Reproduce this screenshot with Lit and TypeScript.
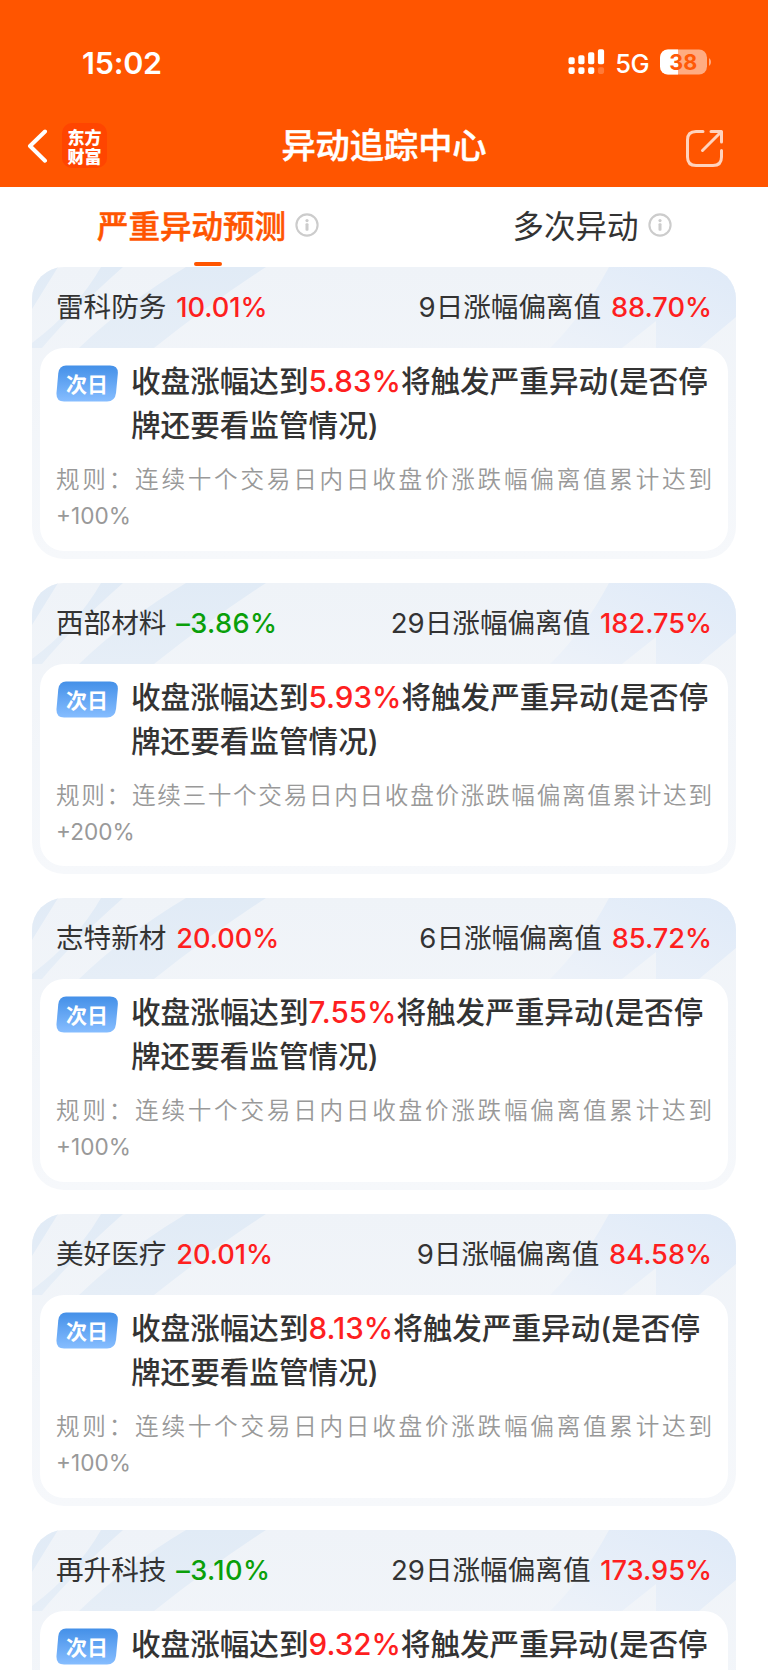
import { LitElement, html, css, svg } from "lit";
import { customElement, property } from "lit/decorators.js";

interface Stock {
  name: string;
  change: string;
  days: number;
  deviation: string;
  trigger: string;
  rule: string;
  limit: string;
}

const TEN = "规则：连续十个交易日内日收盘价涨跌幅偏离值累计达到";
const THIRTY = "规则：连续三十个交易日内日收盘价涨跌幅偏离值累计达到";

const STOCKS: Stock[] = [
  { name: "雷科防务", change: "10.01%", days: 9, deviation: "88.70%", trigger: "5.83%", rule: TEN, limit: "+100%" },
  { name: "西部材料", change: "–3.86%", days: 29, deviation: "182.75%", trigger: "5.93%", rule: THIRTY, limit: "+200%" },
  { name: "志特新材", change: "20.00%", days: 6, deviation: "85.72%", trigger: "7.55%", rule: TEN, limit: "+100%" },
  { name: "美好医疗", change: "20.01%", days: 9, deviation: "84.58%", trigger: "8.13%", rule: TEN, limit: "+100%" },
  { name: "再升科技", change: "–3.10%", days: 29, deviation: "173.95%", trigger: "9.32%", rule: THIRTY, limit: "+200%" },
];

const infoIcon = html`<svg class="info" width="24" height="24" viewBox="0 0 24 24" fill="none">
  <circle cx="12" cy="12" r="10.6" stroke="#ccc" stroke-width="2.1" />
  <circle cx="12" cy="7.6" r="1.6" fill="#ccc" />
  <rect x="10.5" y="10.3" width="3" height="7.4" rx="1" fill="#ccc" />
</svg>`;

@customElement("status-bar")
class StatusBar extends LitElement {
  static styles = css`
    :host { display: flex; justify-content: space-between; align-items: center; height: 38px; padding: 43px 56px 0 82px; color: #fff; }
    .time { font-size: 30.5px; font-weight: 600; letter-spacing: -0.2px; }
    .right { display: flex; align-items: center; }
    .net { font-size: 25.5px; font-weight: 450; margin: 2px 11px 0 10px; letter-spacing: -0.6px; }
  `;
  render() {
    const bars = [[0, 8, 7], [9.8, 6, 9], [19.6, 3, 12], [29.4, 0, 15]];
    return html`
      <span class="time">15:02</span>
      <span class="right">
        <svg width="37" height="26" viewBox="0 0 37 26" fill="#fff">
          ${bars.map(([x, y, h], i) => svg`
            <rect x=${x + 0.5} y=${y + 0.2} width="6.2" height=${h} rx="1.8" />
            <rect x=${x + 0.5} y="18.3" width="6.2" height="6.6" rx="1.8" opacity=${i === 3 ? 0.22 : 1} />`)}
        </svg>
        <span class="net">5G</span>
        <svg width="52" height="26" viewBox="0 0 52 26">
          <defs><clipPath id="level"><rect width="18" height="26" /></clipPath></defs>
          <rect y="0.5" width="47" height="25" rx="8" fill="#ffac82" />
          <rect y="0.5" width="47" height="25" rx="8" fill="#fff" clip-path="url(#level)" />
          <path d="M49 9.2c2.6 1 2.6 6.4 0 7.5z" fill="#ffac82" />
          <text x="23.2" y="20.7" text-anchor="middle" font-family="Inter" font-size="21.5" font-weight="700" fill="#ff5a08">38</text>
        </svg>
      </span>
    `;
  }
}

@customElement("nav-bar")
class NavBar extends LitElement {
  static styles = css`
    :host { display: grid; grid-template-columns: 1fr auto 1fr; align-items: center; height: 88px; padding: 5px 27px 0; box-sizing: border-box; color: #fff; }
    .left { display: flex; align-items: center; gap: 14px; }
    .logo { width: 45px; height: 45px; border-radius: 10px; background: #ff4500; display: grid; place-content: center; font: 900 17px/19px "Noto Sans CJK SC", sans-serif; text-align: center; }
    .title { font-size: 34.2px; font-weight: 500; line-height: 46px; -webkit-text-stroke: 0.5px #fff; }
    .share { justify-self: end; margin: 5px 17px 0 0; }
  `;
  render() {
    return html`
      <span class="left">
        <svg width="21" height="34" viewBox="0 0 21 34" fill="none" stroke="#fff" stroke-width="4" stroke-linecap="round" stroke-linejoin="round"><path d="M18 2.5L3 17l15 14.7" /></svg>
        <span class="logo">东方<br />财富</span>
      </span>
      <span class="title">异动追踪中心</span>
      <svg class="share" width="39" height="39" viewBox="0 0 39 39" fill="none" stroke="#ffd3bd" stroke-width="3" stroke-linecap="round" stroke-linejoin="round">
        <path d="M18 2.5H11C5.500 2.500 2.500 5.500 2.500 11V28C2.500 33.500 5.500 36.500 11 36.500H28C33.500 36.500 36.500 33.500 36.500 28V21.500" />
        <path d="M26 2.5H36.500V13M36 3L17.500 21.500" />
      </svg>
    `;
  }
}

@customElement("stock-card")
class StockCard extends LitElement {
  @property({ attribute: false }) stock!: Stock;
  static styles = css`
    :host { display: grid; height: 291.5px; border-radius: 32px; overflow: hidden; color: #333; background: linear-gradient(#eff3f8, #f6f8fb); }
    .art, .body { grid-area: 1 / 1; min-width: 0; }
    .body { display: flex; flex-direction: column; padding: 0 8px 8px; z-index: 1; }
    .head { display: flex; justify-content: space-between; height: 81px; line-height: 80px; padding: 0 16px; font-size: 27.6px; }
    .num { font-size: 27.2px; font-weight: 500; margin-left: 2px; }
    .up { color: #fe1f1f; }
    .down { color: #0a9f0a; letter-spacing: 0.4px; }
    .panel { flex: 1; background: #fff; border-radius: 24px; padding: 11px 16px 0; }
    .alert { display: flex; gap: 13px; }
    .text { font-size: 29.6px; line-height: 44px; font-weight: 500; white-space: nowrap; }
    .rule { margin-top: 15px; font-size: 23.6px; line-height: 36px; color: #999; }
    .line { text-align: justify; text-align-last: justify; white-space: nowrap; font-weight: 350; }
    .limit { font-size: 22.6px; }
    .tag { flex: none; margin-top: 6px; }
  `;
  render() {
    const s = this.stock;
    return html`
      <svg class="art" width="704" height="90" viewBox="0 0 704 90">
        <defs>
          <linearGradient id="l" x2="0" y2="1"><stop stop-color="#e1ebf6" /><stop offset="1" stop-color="#e6eef7" /></linearGradient>
          <linearGradient id="r" x1="1" x2="0" y2="1"><stop stop-color="#dfeaf8" /><stop offset="1" stop-color="#edf2f9" /></linearGradient>
        </defs>
        <path d="M0 0H26L0 42zM69 0H91Q40 45 10 81H0V76Q45 42 69 0zM154 0H234Q180 35 122 81H47Q95 35 154 0z" fill="url(#l)" />
        <path d="M577 0H704V50L667 81H624V54L590 81H518Q550 50 577 0z" fill="url(#r)" />
      </svg>
      <div class="body">
        <div class="head">
          <span>${s.name} <span class="num ${s.change.startsWith("–") ? "down" : "up"}">${s.change}</span></span>
          <span>${s.days}日涨幅偏离值 <span class="num up">${s.deviation}</span></span>
        </div>
        <div class="panel">
          <div class="alert">
            <svg class="tag" width="62" height="37" viewBox="0 0 62 37">
              <defs><linearGradient id="t" x2="0" y2="1"><stop stop-color="#4490e8" /><stop offset="1" stop-color="#86bdff" /></linearGradient></defs>
              <path d="M10 .5H54Q62.5 .5 61.8 9L60 28Q59 36.5 51 36.5H8Q0 36.5 .5 28L2.3 8Q3.5 .5 10 .5z" fill="url(#t)" />
              <text x="31" y="26.5" text-anchor="middle" font-family="Noto Sans CJK SC" font-size="21" font-weight="700" fill="#fff">次日</text>
            </svg>
            <div class="text">收盘涨幅达到<span class="up">${s.trigger}</span>将触发严重异动(是否停<br />牌还要看监管情况)</div>
          </div>
          <div class="rule"><div class="line">${s.rule}</div><div class="limit">${s.limit}</div></div>
        </div>
      </div>
    `;
  }
}

@customElement("app-root")
class AppRoot extends LitElement {
  static styles = css`
    :host { display: block; height: 1670px; overflow: hidden; background: #fff; font-family: Inter, "Noto Sans CJK SC", sans-serif; }
    .top { background: #ff5500; height: 187px; display: flex; flex-direction: column; justify-content: space-between; }
    .tabs { display: grid; grid-template-columns: 1fr 1fr; height: 80px; font-size: 31.5px; color: #333; }
    .tab { display: flex; flex-direction: column; align-items: center; padding-left: 32px; }
    .label { display: flex; align-items: center; gap: 9px; height: 74px; }
    .info { margin-top: 2px; }
    .active { color: #ff5500; font-weight: 500; -webkit-text-stroke: 0.5px #ff5500; }
    .bar { width: 28px; height: 4px; border-radius: 2px; background: #ff5500; margin-top: 1px; }
    .list { display: flex; flex-direction: column; gap: 24.2px; padding: 0 32px; }
  `;
  render() {
    return html`
      <div class="top"><status-bar></status-bar><nav-bar></nav-bar></div>
      <div class="tabs">
        <div class="tab active"><span class="label">严重异动预测${infoIcon}</span><span class="bar"></span></div>
        <div class="tab"><span class="label">多次异动${infoIcon}</span></div>
      </div>
      <div class="list">${STOCKS.map((s) => html`<stock-card .stock=${s}></stock-card>`)}</div>
    `;
  }
}
